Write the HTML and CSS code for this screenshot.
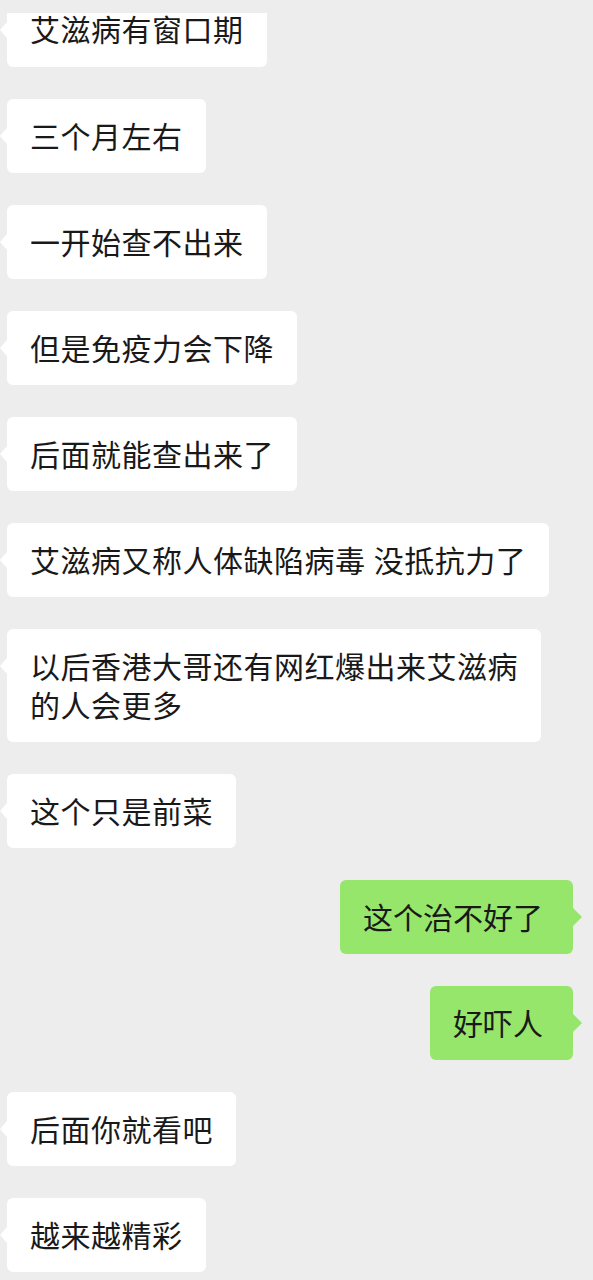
FILE: index.html
```html
<!DOCTYPE html>
<html lang="zh-CN">
<head>
    <meta charset="UTF-8">
    <meta name="viewport" content="width=device-width, initial-scale=1.0">
    <title>聊天记录</title>
    <link rel="stylesheet" href="styles.css">
</head>
<body>
    <div class="chat">
        <div class="msg left cut">艾滋病有窗口期</div>
        <div class="msg left">三个月左右</div>
        <div class="msg left">一开始查不出来</div>
        <div class="msg left">但是免疫力会下降</div>
        <div class="msg left">后面就能查出来了</div>
        <div class="msg left">艾滋病又称人体缺陷病毒 没抵抗力了</div>
        <div class="msg left">以后香港大哥还有网红爆出来艾滋病<br>的人会更多</div>
        <div class="msg left">这个只是前菜</div>
        <div class="msg right">这个治不好了</div>
        <div class="msg right">好吓人</div>
        <div class="msg left">后面你就看吧</div>
        <div class="msg left">越来越精彩</div>
    </div>
</body>
</html>
```

FILE: styles.css
```css
body {
    margin: 0;
    padding: 0;
    background-color: #ededed;
    font-family: "Noto Sans", "Noto Sans CJK SC", sans-serif;
    color: #191919;
}
.chat {
    display: flex;
    flex-direction: column;
    gap: 32px;
    padding: 13px 20px 0 7px;
}
.msg {
    position: relative;
    max-width: 555px;
    box-sizing: border-box;
    padding: 18px 23px 17px 23px;
    font-size: 30px;
    line-height: 39px;
    letter-spacing: 0.5px;
    border-radius: 6px;
}
/* first bubble is cut by the top edge of the screenshot */
.msg.cut {
    padding-top: 2px;
    padding-bottom: 22px;
    line-height: 30px;
    border-top-left-radius: 0;
    border-top-right-radius: 0;
}
.left {
    align-self: flex-start;
    background: #ffffff;
}
.right {
    align-self: flex-end;
    background: #95e66b;
    letter-spacing: 0;
    padding-right: 30px;
}
.left::before {
    content: "";
    position: absolute;
    left: -7px;
    top: 29px;
    border-top: 8px solid transparent;
    border-bottom: 8px solid transparent;
    border-right: 7px solid #ffffff;
}
.cut::before {
    top: 9px;
}
.right::after {
    content: "";
    position: absolute;
    right: -9px;
    top: 28px;
    border-top: 9px solid transparent;
    border-bottom: 9px solid transparent;
    border-left: 9px solid #95e66b;
}
```
